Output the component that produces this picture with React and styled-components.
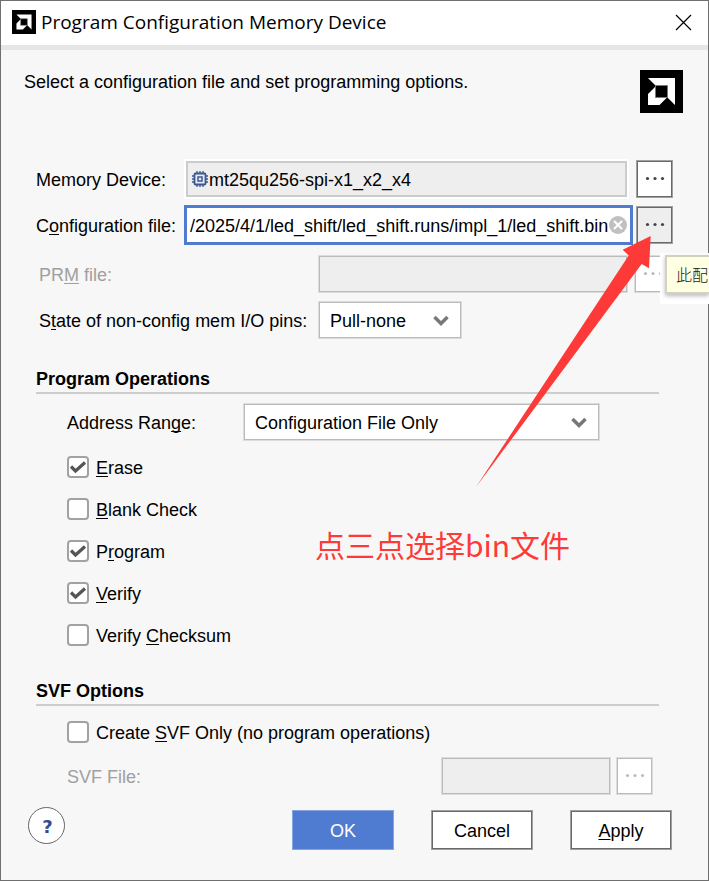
import React from 'react';
import styled, { createGlobalStyle, css } from 'styled-components';

const GlobalStyle = createGlobalStyle`
  * {
    box-sizing: border-box;
  }

  body {
    margin: 0;
    background: #f7f7f7;
    color: #000;
    font-family: 'Liberation Sans', Arial, sans-serif;
    font-size: 18px;
    line-height: 24px;
  }

  button, input, select {
    margin: 0;
    font: inherit;
    color: inherit;
  }
`;

const Window = styled.div`
  position: relative;
  border: 1px solid #6f6f6f;
  background: #f7f7f7;
`;

const TitleBar = styled.header`
  display: flex;
  align-items: center;
  gap: 5px;
  height: 49px;
  padding: 0 16px 2px 11px;
  background: #fff;
  border-bottom: 5px solid #e6e6e6;
`;

const Title = styled.h1`
  flex: 1;
  margin: 0;
  font-family: 'Open Sans', 'Noto Sans', sans-serif;
  font-size: 19px;
  font-weight: 400;
  white-space: nowrap;
`;

const CloseButton = styled.button`
  display: flex;
  padding: 0;
  border: 0;
  background: none;
`;

const Intro = styled.div`
  display: flex;
  align-items: flex-start;
  justify-content: space-between;
  padding: 20px 25px 0 23px;
`;

const Description = styled.p`
  margin: 0;
`;

const Form = styled.form`
  padding: 46px 35px 30px 35px;
`;

const Group = styled.div`
  display: flex;
  flex-direction: column;
  gap: 6px;
  margin-top: ${(props) => props.$top || 0}px;
  padding: 0 ${(props) => props.$right || 0}px 0 ${(props) => props.$left || 0}px;
`;

const Row = styled.div`
  display: flex;
  align-items: center;
  gap: ${(props) => props.$gap || 0}px;
  height: 40px;
`;

const Label = styled.label`
  flex: 0 0 ${(props) => props.$width}px;
  padding-top: 2px;
  white-space: nowrap;
  color: ${(props) => (props.$disabled ? '#a0a0a0' : '#000')};
`;

const FieldBox = styled.div`
  flex: 1;
  display: flex;
  align-items: center;
  min-width: 0;
  height: 38px;
  padding: 1px;
  border: 1px solid #dcdcdc;
  background: #eee;
  box-shadow: inset 0 0 0 1px #bbb;

  ${(props) => props.$haloed && css`
    height: 36px;
    margin: 0 4px 0 2px;
    padding-left: 3px;
    border: 2px solid #ccc;
    box-shadow: 0 0 0 2px #fff;
  `}

  ${(props) => props.$focused && css`
    height: 40px;
    padding: 0 3px;
    border: 3px solid #4f7bd0;
    background: #fff;
    box-shadow: none;
  `}
`;

const TextInput = styled.input`
  flex: 1;
  min-width: 0;
  height: 28px;
  padding: 2px 0 0;
  border: 0;
  outline: 0;
  background: transparent;
`;

const ClearButton = styled.button`
  display: flex;
  padding: 0;
  border: 0;
  background: none;
`;

const BrowseButton = styled.button`
  display: flex;
  align-items: center;
  justify-content: center;
  flex: 0 0 37px;
  height: 38px;
  padding: 0;
  border: 1px solid #a0a0a0;
  background: ${(props) => (props.$active ? '#eee' : '#fff')};
  box-shadow: inset 0 0 0 1px #6a6a6a;
  color: #444;

  &:disabled {
    border-color: #dcdcdc;
    box-shadow: inset 0 0 0 1px #bbb;
    color: #bbb;
  }
`;

const SelectBox = styled.div`
  flex: ${(props) => (props.$width ? `0 0 ${props.$width}px` : 1)};
  display: grid;
  align-items: center;

  select, svg {
    grid-area: 1 / 1;
  }

  svg {
    justify-self: end;
    margin: 2px 13px 0 0;
    pointer-events: none;
  }
`;

const Select = styled.select`
  appearance: none;
  width: 100%;
  height: 38px;
  padding: 2px 40px 0 11px;
  border: 1px solid #dcdcdc;
  border-radius: 0;
  background: #fff;
  box-shadow: inset 0 0 0 1px #bbb;
`;

const SectionTitle = styled.h2`
  margin: ${(props) => props.$top}px 14px 0 0;
  padding-bottom: 1px;
  border-bottom: 2px solid #cdcdcd;
  font-size: 18px;
  font-weight: 700;
`;

const CheckLabel = styled.label`
  display: flex;
  align-items: center;
  gap: 7px;
  height: 42px;

  > span:last-child {
    padding-top: 2px;
  }
`;

const CheckMark = styled.span`
  display: grid;
  place-items: center;

  input, svg {
    grid-area: 1 / 1;
  }

  svg {
    visibility: hidden;
    pointer-events: none;
  }

  input:checked + svg {
    visibility: visible;
  }
`;

const CheckInput = styled.input`
  appearance: none;
  width: 22px;
  height: 22px;
  border: 2px solid #a2a2a2;
  border-radius: 4px;
  background: #fff;
`;

const CheckList = styled.div`
  margin-top: ${(props) => props.$top}px;
  padding-left: 31px;
`;

const Footer = styled.footer`
  display: flex;
  justify-content: space-between;
  align-items: flex-start;
  height: 43px;
  margin: 11px 1px 0 -8px;
`;

const HelpButton = styled.button`
  width: 37px;
  height: 37px;
  padding: 2px 0 0 2px;
  border: 1px solid #666;
  border-radius: 50%;
  background: #fff;
  color: #2f4d8c;
  font-family: 'DejaVu Sans', sans-serif;
  font-weight: 700;
`;

const Actions = styled.div`
  display: flex;
  align-self: flex-end;
  gap: 37px;
`;

const ActionButton = styled.button`
  width: 102px;
  height: 40px;
  padding: 2px 0 0;
  border: 1px solid #a0a0a0;
  background: #fff;
  box-shadow: inset 0 0 0 1px #6a6a6a;

  ${(props) => props.$primary && css`
    border-color: #87a5df;
    background: #4f7bd0;
    box-shadow: none;
    color: #fff;
  `}
`;

const Key = styled.span`
  text-decoration: underline;
  text-decoration-thickness: 1px;
  text-underline-offset: 2px;
  text-decoration-skip-ink: none;
`;

const TooltipArea = styled.div`
  position: absolute;
  top: 252px;
  right: -1px;
  width: 49px;
  height: 51px;
  padding: 2px 0 0 5px;
  overflow: hidden;
  background: #fff;
`;

const Tooltip = styled.div`
  height: 39px;
  padding: 6px 0 0 9px;
  border: 2px solid #d2d2c4;
  border-right: 0;
  background: #ffffe1;
  box-shadow: 0 2px 4px #bbb;
  font-family: 'Noto Sans CJK SC', sans-serif;
  font-size: 16px;
  font-weight: 300;
  line-height: 22px;
  color: #222;
  white-space: nowrap;
`;

const Arrow = styled.svg`
  position: absolute;
  top: 234px;
  right: 56px;
  pointer-events: none;
`;

const Note = styled.div`
  position: absolute;
  top: 521px;
  right: 138px;
  color: #fe3a38;
  font-family: 'Noto Sans CJK SC', sans-serif;
  font-size: 30px;
  line-height: 44px;
  white-space: nowrap;
`;

const Logo = ({ size }) => (
  <svg width={size} height={size} viewBox="0 0 43 43" aria-hidden="true">
    <path fill="#000" d="M0 0h43v43H0z" />
    <path fill="#fff" d="M8 8h27v27l-7.500-7.500V15.500H15.500z" />
    <path fill="#fff" d="M15.500 16.500v11H27L19.500 35H8V24z" />
    <path fill="none" stroke="#777" d="M15.500 15.500h12v12h-12z" />
  </svg>
);

const Dots = () => (
  <svg width="20" height="6" viewBox="0 0 20 6" fill="currentColor" aria-hidden="true">
    <circle cx="2.500" cy="2.500" r="1.600" />
    <circle cx="10" cy="2.500" r="1.600" />
    <circle cx="17.500" cy="2.500" r="1.600" />
  </svg>
);

const Chevron = () => (
  <svg width="16" height="12" viewBox="0 0 16 12" aria-hidden="true">
    <path d="M1.500 2L8 8.500 14.500 2" fill="none" stroke="#777" strokeWidth="3.500" />
  </svg>
);

const Tick = () => (
  <svg width="18" height="16" viewBox="0 0 18 16" aria-hidden="true">
    <path d="M2 7.500l4.500 4.500L16 3.500" fill="none" stroke="#555" strokeWidth="3.200" />
  </svg>
);

const Chip = () => (
  <svg width="18" height="18" viewBox="0 0 18 18" fill="none" stroke="#3d578f" aria-hidden="true">
    <path strokeWidth="1.300" d="M6 1v3M9 1v3M12 1v3M6 14v3M9 14v3M12 14v3M1 6h3M1 9h3M1 12h3M14 6h3M14 9h3M14 12h3" />
    <rect x="3.500" y="3.500" width="11" height="11" rx="1" strokeWidth="1.800" fill="#e4ebf7" />
    <rect x="7" y="7" width="4" height="4" strokeWidth="1.500" />
  </svg>
);

const Browse = ({ label, ...rest }) => (
  <BrowseButton type="button" aria-label={label} {...rest}>
    <Dots />
  </BrowseButton>
);

const Check = ({ checked, children }) => (
  <CheckLabel>
    <CheckMark>
      <CheckInput type="checkbox" defaultChecked={checked} />
      <Tick />
    </CheckMark>
    <span>{children}</span>
  </CheckLabel>
);

const Dropdown = ({ id, width, value }) => (
  <SelectBox $width={width}>
    <Select id={id} defaultValue={value}>
      <option>{value}</option>
    </Select>
    <Chevron />
  </SelectBox>
);

const App = () => (
  <>
    <GlobalStyle />
    <Window>
      <TitleBar>
        <Logo size={24} />
        <Title>Program Configuration Memory Device</Title>
        <CloseButton type="button" aria-label="Close">
          <svg width="17" height="17" viewBox="0 0 17 17" aria-hidden="true">
            <path d="M1 1l15 15M16 1L1 16" stroke="#000" strokeWidth="1.200" />
          </svg>
        </CloseButton>
      </TitleBar>

      <Intro>
        <Description>Select a configuration file and set programming options.</Description>
        <Logo size={43} />
      </Intro>

      <Form onSubmit={(e) => e.preventDefault()}>
        <Group>
          <Row $gap={5}>
            <Label htmlFor="device" $width={143}>Memory Device:</Label>
            <FieldBox $haloed>
              <Chip />
              <TextInput id="device" readOnly defaultValue="mt25qu256-spi-x1_x2_x4" />
            </FieldBox>
            <Browse label="Choose memory device" />
          </Row>
          <Row $gap={3}>
            <Label htmlFor="config" $width={145}>
              C
              <Key>o</Key>
              nfiguration file:
            </Label>
            <FieldBox $focused>
              <TextInput id="config" defaultValue="/2025/4/1/led_shift/led_shift.runs/impl_1/led_shift.bin" />
              <ClearButton type="button" aria-label="Clear">
                <svg width="18" height="18" viewBox="0 0 18 18" aria-hidden="true">
                  <circle cx="9" cy="9" r="9" fill="#c0c0c0" />
                  <path d="M5 5l8 8M13 5l-8 8" stroke="#fff" strokeWidth="2" />
                </svg>
              </ClearButton>
            </FieldBox>
            <Browse label="Choose configuration file" $active />
          </Row>
        </Group>

        <Group $top={9} $left={3} $right={2}>
          <Row $gap={6}>
            <Label htmlFor="prm" $width={273} $disabled>
              PR
              <Key>M</Key>
              {' file:'}
            </Label>
            <FieldBox>
              <TextInput id="prm" disabled />
            </FieldBox>
            <Browse label="Choose PRM file" disabled />
          </Row>
          <Row $gap={6}>
            <Label htmlFor="pins" $width={273}>
              S
              <Key>t</Key>
              ate of non-config mem I/O pins:
            </Label>
            <Dropdown id="pins" width={144} value="Pull-none" />
          </Row>
        </Group>

        <SectionTitle $top={27}>Program Operations</SectionTitle>
        <Group $top={8} $left={31} $right={73}>
          <Row>
            <Label htmlFor="range" $width={176}>
              Address Ran
              <Key>g</Key>
              e:
            </Label>
            <Dropdown id="range" value="Configuration File Only" />
          </Row>
        </Group>
        <CheckList $top={4}>
          <Check checked>
            <Key>E</Key>
            rase
          </Check>
          <Check>
            <Key>B</Key>
            lank Check
          </Check>
          <Check checked>
            P
            <Key>r</Key>
            ogram
          </Check>
          <Check checked>
            <Key>V</Key>
            erify
          </Check>
          <Check>
            {'Verify '}
            <Key>C</Key>
            hecksum
          </Check>
        </CheckList>

        <SectionTitle $top={23}>SVF Options</SectionTitle>
        <CheckList $top={5}>
          <Check>
            {'Create '}
            <Key>S</Key>
            VF Only (no program operations)
          </Check>
        </CheckList>
        <Group $top={3} $left={31} $right={20}>
          <Row $gap={5}>
            <Label htmlFor="svf" $width={369} $disabled>SVF File:</Label>
            <FieldBox>
              <TextInput id="svf" disabled />
            </FieldBox>
            <Browse label="Choose SVF file" disabled />
          </Row>
        </Group>

        <Footer>
          <HelpButton type="button" aria-label="Help">?</HelpButton>
          <Actions>
            <ActionButton type="submit" $primary>OK</ActionButton>
            <ActionButton type="button">Cancel</ActionButton>
            <ActionButton type="button">
              <Key>A</Key>
              pply
            </ActionButton>
          </Actions>
        </Footer>
      </Form>

      <TooltipArea>
        <Tooltip role="tooltip">此配</Tooltip>
      </TooltipArea>
      <Arrow width="180" height="256" viewBox="0 0 180 256" aria-hidden="true">
        <path fill="#fe3a38" d="M178.700 1L150.700 14.700 156.700 20.500 4 252 169.700 29 177 33.300z" />
      </Arrow>
      <Note>点三点选择bin文件</Note>
    </Window>
  </>
);

export default App;
